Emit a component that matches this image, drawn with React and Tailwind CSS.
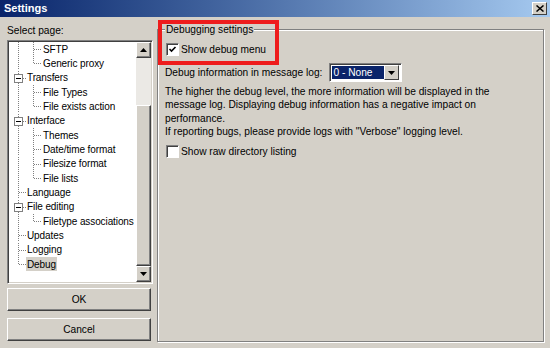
import React from "react";

const rows = [
  { t: "SFTP", lvl: 2 },
  { t: "Generic proxy", lvl: 2, last: true },
  { t: "Transfers", lvl: 1, exp: true },
  { t: "File Types", lvl: 2 },
  { t: "File exists action", lvl: 2, last: true },
  { t: "Interface", lvl: 1, exp: true },
  { t: "Themes", lvl: 2 },
  { t: "Date/time format", lvl: 2 },
  { t: "Filesize format", lvl: 2 },
  { t: "File lists", lvl: 2, last: true },
  { t: "Language", lvl: 1 },
  { t: "File editing", lvl: 1, exp: true },
  { t: "Filetype associations", lvl: 2, last: true },
  { t: "Updates", lvl: 1 },
  { t: "Logging", lvl: 1 },
  { t: "Debug", lvl: 1, rootLast: true, sel: true },
];

const dot = { stroke: "#808080", strokeWidth: 1, strokeDasharray: "1 1" };

function TreeLines({ row }) {
  const w = row.lvl === 1 ? 17 : 33;
  return (
    <svg width={w} height="14" viewBox={`0 0 ${w} 14`} className="shrink-0">
      {/* root line */}
      {row.lvl === 1 && row.exp ? (
        <>
          <line x1="9.5" y1="0" x2="9.5" y2="3" style={dot} />
          <line x1="9.5" y1="12" x2="9.5" y2="14" style={dot} />
          <rect x="5.5" y="3.5" width="8" height="8" fill="#fff" stroke="#808080" />
          <line x1="7" y1="7.5" x2="12" y2="7.5" stroke="#000" />
          <line x1="14" y1="7.5" x2="17" y2="7.5" style={dot} />
        </>
      ) : (
        <line x1="9.5" y1="0" x2="9.5" y2={row.rootLast ? 7.5 : 14} style={dot} />
      )}
      {row.lvl === 1 && !row.exp && (
        <line x1="10" y1="7.5" x2="17" y2="7.5" style={dot} />
      )}
      {row.lvl === 2 && (
        <>
          <line x1="24.5" y1="0" x2="24.5" y2={row.last ? 7.5 : 14} style={dot} />
          <line x1="25" y1="7.5" x2="33" y2="7.5" style={dot} />
        </>
      )}
    </svg>
  );
}

function Arrow({ up }) {
  return (
    <svg width="7" height="4" viewBox="0 0 7 4">
      <path d={up ? "M3.5 0 L7 4 L0 4 Z" : "M0 0 L7 0 L3.5 4 Z"} fill="#000" />
    </svg>
  );
}

function ScrollButton({ up }) {
  return (
    <div className="h-[16px] flex items-center justify-center bg-[#d4d0c8] border border-t-white border-l-white border-r-[#404040] border-b-[#404040] shadow-[inset_-1px_-1px_0_#808080]">
      <Arrow up={up} />
    </div>
  );
}

function Checkbox({ checked }) {
  return (
    <div className="w-[13px] h-[13px] shrink-0 bg-white border border-t-[#808080] border-l-[#808080] border-r-white border-b-white shadow-[inset_1px_1px_0_#404040] flex items-center justify-center">
      {checked && (
        <svg width="9" height="9" viewBox="0 0 9 9">
          <path d="M1.5 4 L3.5 6 L7.5 2" stroke="#000" strokeWidth="1.6" fill="none" />
        </svg>
      )}
    </div>
  );
}

function Button({ children }) {
  return (
    <button className="w-[144px] h-[23px] flex items-center justify-center bg-[#d4d0c8] border border-t-white border-l-white border-r-[#404040] border-b-[#404040] shadow-[inset_-1px_-1px_0_#808080] text-black">
      {children}
    </button>
  );
}

export default function App() {
  return (
    <div className="w-[550px] h-[348px] bg-[#d4d0c8] flex flex-col overflow-hidden text-[10.2px] text-black font-['Liberation_Sans',Arial,sans-serif] leading-[13px]">
      {/* Title bar */}
      <div className="h-[17px] shrink-0 flex items-center justify-between pl-[4px] pr-[3px] bg-gradient-to-r from-[#0a246a] to-[#a6caf0]">
        <span className="text-white font-bold text-[11px]">Settings</span>
        <div className="w-[15px] h-[13px] flex items-center justify-center bg-[#d4d0c8] border border-t-white border-l-white border-r-[#404040] border-b-[#404040]">
          <svg width="8" height="7" viewBox="0 0 8 7">
            <path d="M0.5 0.5 L7.5 6.5 M7.5 0.5 L0.5 6.5" stroke="#000" strokeWidth="1.5" />
          </svg>
        </div>
      </div>

      <div className="flex flex-1 pl-[7px]">
        {/* Left column */}
        <div className="w-[146px] flex flex-col pt-[7px]">
          <div className="mb-[3px]">Select page:</div>
          <div className="h-[244px] flex bg-white border border-t-[#808080] border-l-[#808080] border-r-white border-b-white shadow-[inset_1px_1px_0_#404040,inset_-1px_-1px_0_#d4d0c8] pr-[1px]">
            <div className="flex-1 min-w-0 flex flex-col pt-[1px] pl-[1px] text-[10px] tracking-[-0.1px]">
              {rows.map((r) => (
                <div key={r.t} className="h-[14.33px] flex items-center whitespace-nowrap">
                  <TreeLines row={r} />
                  <span className={`px-[1px] h-[14px] flex items-center ${r.sel ? "bg-[#d4d0c8]" : ""}`}>
                    {r.t}
                  </span>
                </div>
              ))}
            </div>
            <div className="w-[15px] shrink-0 flex flex-col pt-[1px] pb-[1px]">
              <ScrollButton up />
              <div className="h-[47px] bg-[#ebe9e5]" />
              <div className="flex-1 bg-[#d4d0c8] border border-t-white border-l-white border-r-[#404040] border-b-[#404040] shadow-[inset_-1px_-1px_0_#808080]" />
              <ScrollButton />
            </div>
          </div>
          <div className="mt-[4px]">
            <Button>OK</Button>
          </div>
          <div className="mt-[7px]">
            <Button>Cancel</Button>
          </div>
        </div>

        {/* Right panel */}
        <div className="ml-[4px] mt-[12px] w-[387px] h-[313px] relative border border-[#808080] shadow-[1px_1px_0_#fff,inset_1px_1px_0_#fff] pl-[7px] pt-[13px]">
          <div className="absolute left-[7px] -top-[7px] bg-[#d4d0c8] px-[1px]">Debugging settings</div>
          <div className="absolute left-0 -top-[10px] w-[121px] h-[45px] border-4 border-[#ee1c1c]" />

          <div className="flex items-center gap-[2px] h-[13px] pl-[1px]">
            <Checkbox checked />
            <span>Show debug menu</span>
          </div>

          <div className="flex items-center gap-[7px] mt-[7px]">
            <span>Debug information in message log:</span>
            <div className="w-[73px] h-[19px] flex bg-white border border-t-[#808080] border-l-[#808080] border-r-white border-b-white shadow-[inset_1px_1px_0_#404040] p-[2px]">
              <div className="flex-1 bg-[#0a246a] text-white flex items-center pl-[1px]">0 - None</div>
              <div className="w-[15px] flex items-center justify-center bg-[#d4d0c8] border border-t-white border-l-white border-r-[#404040] border-b-[#404040] -my-[1px]">
                <Arrow />
              </div>
            </div>
          </div>

          <p className="mt-[3px] leading-[13.3px] whitespace-nowrap">
            The higher the debug level, the more information will be displayed in the
            <br />
            message log. Displaying debug information has a negative impact on
            <br />
            performance.
            <br />
            If reporting bugs, please provide logs with "Verbose" logging level.
          </p>

          <div className="flex items-center gap-[2px] h-[13px] pl-[1px] mt-[7px]">
            <Checkbox />
            <span>Show raw directory listing</span>
          </div>
        </div>
      </div>
    </div>
  );
}
